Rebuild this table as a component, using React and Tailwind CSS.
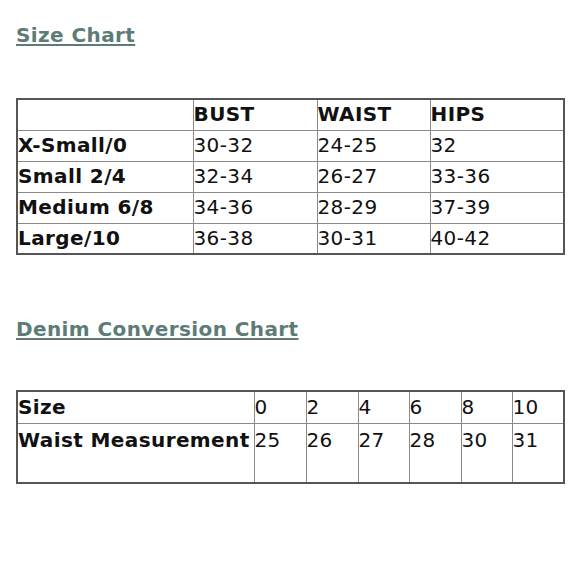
import React from 'react';

const sizes = [
  ['X-Small/0', '30-32', '24-25', '32'],
  ['Small 2/4', '32-34', '26-27', '33-36'],
  ['Medium 6/8', '34-36', '28-29', '37-39'],
  ['Large/10', '36-38', '30-31', '40-42'],
];

const denimSizes = ['0', '2', '4', '6', '8', '10'];
const denimWaist = ['25', '26', '27', '28', '30', '31'];

function Title({ children }) {
  return (
    <h2 className="text-[20px] leading-[22px] font-bold tracking-[0.4px] text-[#5d7c77] underline underline-offset-[2px] decoration-[2px]">
      {children}
    </h2>
  );
}

export default function App() {
  const cell = "border border-[#8a8a8a] p-0 align-middle";
  return (
    <div className="w-[580px] h-[580px] bg-white pl-4 pt-[24px] text-[#111]" style={{ fontFamily: '"DejaVu Sans", Verdana, sans-serif' }}>
      <Title>Size Chart</Title>

      {/* Size chart */}
      <table className="mt-[52px] w-[547px] table-fixed border-collapse border-2 border-[#555] text-[20px] leading-[21px] tracking-[0.4px]">
        <colgroup>
          <col className="w-[176px]" />
          <col className="w-[124px]" />
          <col className="w-[113px]" />
          <col className="w-[134px]" />
        </colgroup>
        <tbody>
          <tr className="h-[31px] font-bold">
            <td className={cell}></td>
            <td className={cell}>BUST</td>
            <td className={cell}>WAIST</td>
            <td className={cell}>HIPS</td>
          </tr>
          {sizes.map(row => (
            <tr key={row[0]} className="h-[31px]">
              <td className={cell + " font-bold"}>{row[0]}</td>
              <td className={cell}>{row[1]}</td>
              <td className={cell}>{row[2]}</td>
              <td className={cell}>{row[3]}</td>
            </tr>
          ))}
        </tbody>
      </table>

      <div className="mt-[63px]">
        <Title>Denim Conversion Chart</Title>
      </div>

      {/* Denim chart */}
      <table className="mt-[50px] w-[547px] table-fixed border-collapse border-2 border-[#555] text-[20px] leading-[21px] tracking-[0.4px]">
        <colgroup>
          <col className="w-[237px]" />
          <col className="w-[52px]" />
          <col className="w-[52px]" />
          <col className="w-[51px]" />
          <col className="w-[52px]" />
          <col className="w-[51px]" />
          <col className="w-[52px]" />
        </colgroup>
        <tbody>
          <tr className="h-[32px]">
            <td className={cell + " font-bold"}>Size</td>
            {denimSizes.map(s => (
              <td key={s} className={cell}>{s}</td>
            ))}
          </tr>
          <tr className="h-[60px]">
            <td className="border border-[#8a8a8a] p-0 pt-[6px] align-top font-bold whitespace-nowrap">Waist Measurement</td>
            {denimWaist.map(w => (
              <td key={w} className="border border-[#8a8a8a] p-0 pt-[6px] align-top">{w}</td>
            ))}
          </tr>
        </tbody>
      </table>
    </div>
  );
}
